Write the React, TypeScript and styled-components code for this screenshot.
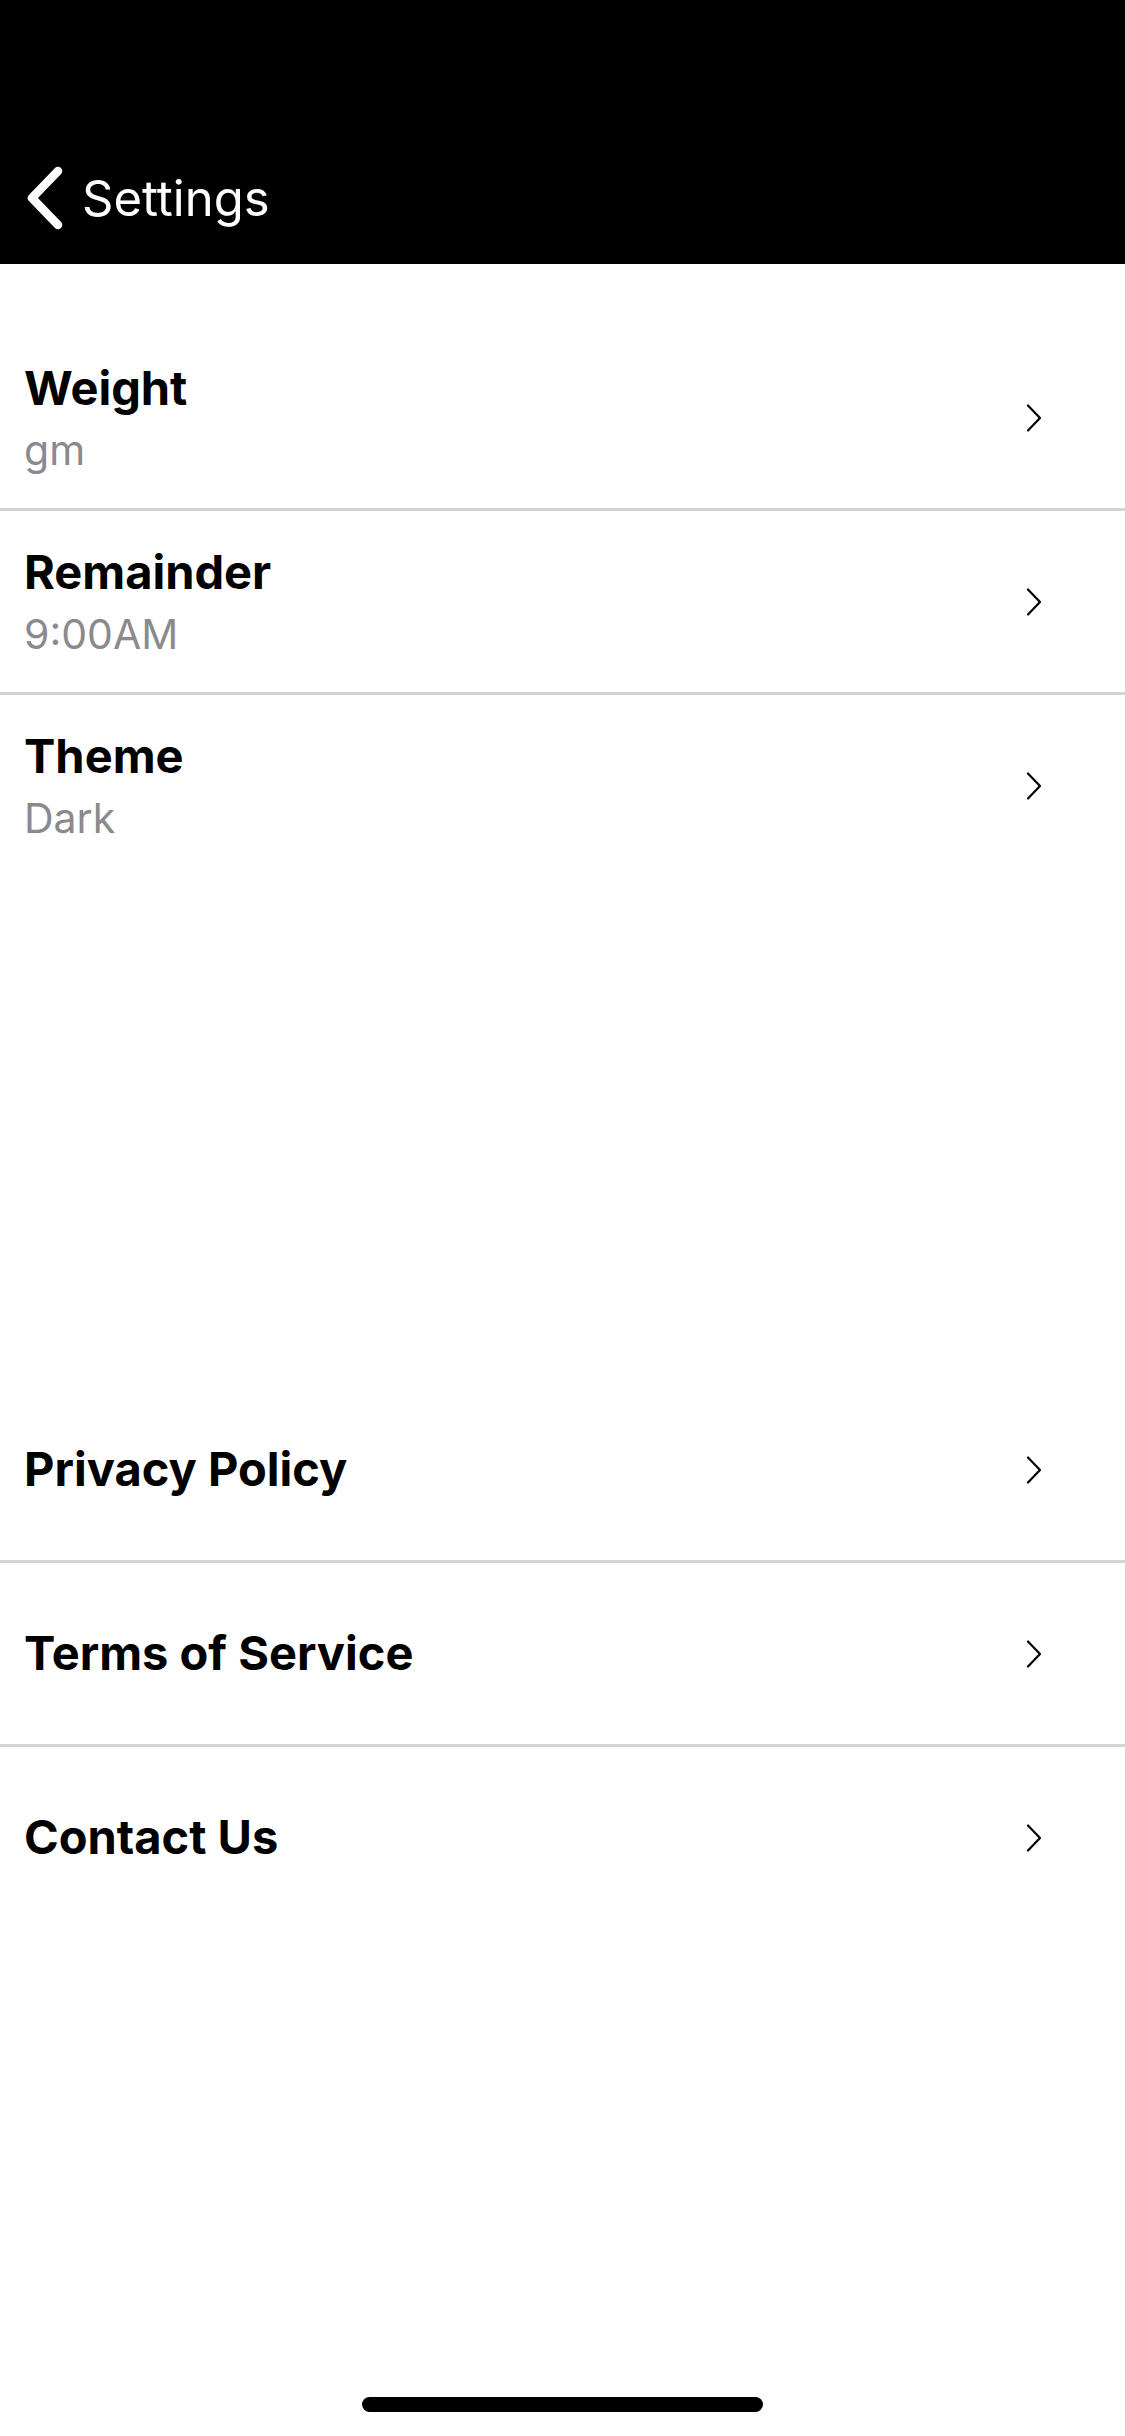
import styled, { createGlobalStyle } from 'styled-components';

const GlobalStyle = createGlobalStyle`
	html, body {
		margin: 0;
		padding: 0;
		background: #ffffff;
	}
	* {
		box-sizing: border-box;
	}
`;

const Screen = styled.div`
	display: flex;
	flex-direction: column;
	min-height: 2436px;
	width: 1125px;
	background: #ffffff;
	font-family: Inter, 'Liberation Sans', sans-serif;
	color: #000000;
`;

const Header = styled.header`
	display: flex;
	align-items: center;
	height: 264px;
	padding: 132px 0 0 27px;
	background: #000000;
`;

const BackButton = styled.div`
	display: flex;
	align-items: center;
	gap: 19px;
	color: #ffffff;
	cursor: pointer;
`;

const HeaderTitle = styled.span`
	font-size: 49px;
	font-weight: 400;
`;

const Group = styled.section<{ $offset: number }>`
	display: flex;
	flex-direction: column;
	margin-top: ${(p) => p.$offset}px;
`;

const Row = styled.div<{ $divider: boolean }>`
	display: flex;
	align-items: center;
	justify-content: space-between;
	height: 184px;
	padding: 0 83px 0 24px;
	border-bottom: 3px solid ${(p) => (p.$divider ? '#d4d4d4' : 'transparent')};
	cursor: pointer;
`;

const Texts = styled.div`
	display: flex;
	flex-direction: column;
	gap: 9px;
`;

const Title = styled.div`
	font-size: 47px;
	line-height: 1.2;
	font-weight: 700;
`;

const Subtitle = styled.div`
	font-size: 41px;
	line-height: 1.2;
	font-weight: 400;
	color: #8a8a8e;
`;

const Spacer = styled.div`
	flex: 1;
`;

const HomeArea = styled.div`
	display: flex;
	justify-content: center;
	padding-bottom: 24px;
`;

const HomeIndicator = styled.div`
	width: 401px;
	height: 15px;
	border-radius: 8px;
	background: #000000;
`;

const BackChevron = () => (
	<svg width="36" height="64" viewBox="0 0 36 64" fill="none">
		<polyline
			points="31,5 5,32 31,59"
			stroke="#ffffff"
			strokeWidth="8.5"
			strokeLinecap="round"
			strokeLinejoin="round"
		/>
	</svg>
);

const Chevron = () => (
	<svg width="16" height="28" viewBox="0 0 16 28" fill="none">
		<polyline
			points="2,1.5 14,14 2,26.5"
			stroke="#000000"
			strokeWidth="2.2"
			strokeLinecap="round"
			strokeLinejoin="round"
		/>
	</svg>
);

type Item = { title: string; value?: string };

const preferences: Item[] = [
	{ title: 'Weight', value: 'gm' },
	{ title: 'Remainder', value: '9:00AM' },
	{ title: 'Theme', value: 'Dark' },
];

const about: Item[] = [
	{ title: 'Privacy Policy' },
	{ title: 'Terms of Service' },
	{ title: 'Contact Us' },
];

const SettingsGroup = ({ items, offset }: { items: Item[]; offset: number }) => (
	<Group $offset={offset}>
		{items.map((item, i) => (
			<Row key={item.title} $divider={i < items.length - 1}>
				<Texts>
					<Title>{item.title}</Title>
					{item.value && <Subtitle>{item.value}</Subtitle>}
				</Texts>
				<Chevron />
			</Row>
		))}
	</Group>
);

export default function App() {
	return (
		<>
			<GlobalStyle />
			<Screen>
				<Header>
					<BackButton>
						<BackChevron />
						<HeaderTitle>{'Settings'}</HeaderTitle>
					</BackButton>
				</Header>
				<SettingsGroup items={preferences} offset={63} />
				<SettingsGroup items={about} offset={500} />
				<Spacer />
				<HomeArea>
					<HomeIndicator />
				</HomeArea>
			</Screen>
		</>
	);
}
